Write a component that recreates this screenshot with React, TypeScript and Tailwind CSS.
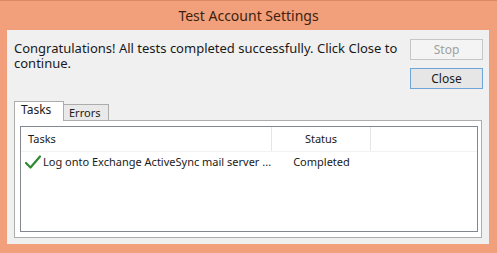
import React from "react";

function CheckIcon() {
  return (
    <svg width="16" height="14" viewBox="0 0 16 14" className="shrink-0">
      <path
        d="M1 8 L5.5 12.5 L15 1.5"
        fill="none"
        stroke="#2f8a2f"
        strokeWidth="2.2"
        strokeLinecap="round"
        strokeLinejoin="round"
      />
    </svg>
  );
}

export default function App() {
  return (
    <div
      className="w-[497px] h-[253px] bg-[#f2a07b] flex flex-col text-[12px] text-[#1a1a1a]"
      style={{ fontFamily: '"Noto Sans", "Open Sans", sans-serif' }}
    >
      <div className="h-[30px] flex items-center justify-center text-[14px] text-[#3d1f10] border-t border-[#d98a64]">
        Test Account Settings
      </div>

      <div className="ml-[7px] w-[482px] h-[214px] bg-[#f0f0f0] flex flex-col">
        <div className="flex justify-between pl-[7px] pr-[6px] pt-[9px]">
          <p className="w-[392px] pt-[2px] text-[13px] leading-[15px]">
            Congratulations! All tests completed successfully. Click Close to
            continue.
          </p>
          <div className="flex flex-col gap-[8px] w-[73px]">
            <button className="h-[21px] border border-[#c6c6c6] bg-[#f4f4f4] text-[#a0a0a0] leading-none">
              Stop
            </button>
            <button className="h-[21px] border border-[#6fa6d8] bg-[#e6e6e6] text-[#1a1a1a] leading-none">
              Close
            </button>
          </div>
        </div>

        <div className="mt-[11px] ml-[7px] flex items-end h-[20px]">
          <div className="w-[50px] h-[20px] bg-white border border-b-0 border-[#acacac] pl-[6px] leading-[16px] relative z-10 -mb-px">
            Tasks
          </div>
          <div className="w-[45px] h-[16px] bg-[#e9e9e9] border border-l-0 border-b-0 border-[#acacac] pl-[5px] text-[11px] leading-[16px]">
            Errors
          </div>
        </div>

        <div className="ml-[7px] w-[468px] h-[118px] bg-white border border-[#acacac] pt-[5px] pl-[5px] pr-[3px] pb-[5px]">
          <div className="h-full border border-[#828790] flex flex-col text-[11px]">
            <div className="flex h-[25px] border-b border-[#f2f2f2]">
              <div className="w-[251px] pl-[7px] flex items-center border-r border-[#e5e5e5]">
                Tasks
              </div>
              <div className="w-[99px] flex items-center justify-center border-r border-[#e5e5e5]">
                Status
              </div>
            </div>
            <div className="flex h-[20px] items-center">
              <div className="w-[251px] pl-[4px] flex items-center gap-[2px]">
                <CheckIcon />
                <span className="whitespace-nowrap">
                  Log onto Exchange ActiveSync mail server ...
                </span>
              </div>
              <div className="w-[99px] text-center">Completed</div>
            </div>
          </div>
        </div>
      </div>
    </div>
  );
}
